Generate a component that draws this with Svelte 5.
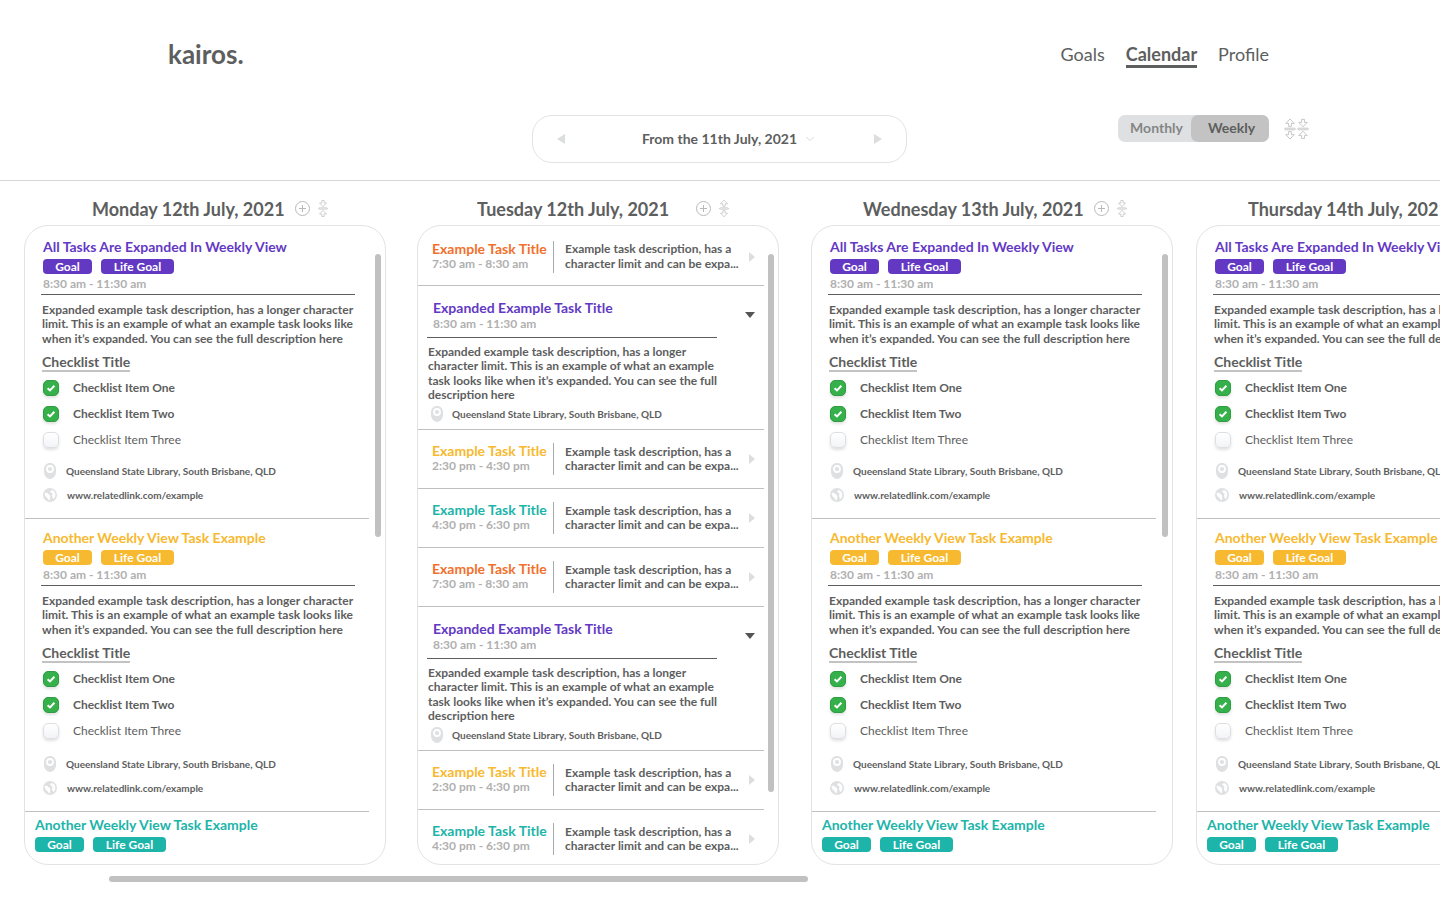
<script>
  const description =
    'Expanded example task description, has a longer character limit. This is an example of what an example task looks like when it’s expanded. You can see the full description here';
  const place = 'Queensland State Library, South Brisbane, QLD';

  const checklist = () => [
    { label: 'Checklist Item One', done: true },
    { label: 'Checklist Item Two', done: true },
    { label: 'Checklist Item Three', done: false }
  ];

  const weekly = () => [
    { kind: 'full', tone: 'purple', title: 'All Tasks Are Expanded In Weekly View', time: '8:30 am - 11:30 am', items: checklist() },
    { kind: 'full', tone: 'yellow', title: 'Another Weekly View Task Example', time: '8:30 am - 11:30 am', items: checklist() },
    { kind: 'brief', tone: 'teal', title: 'Another Weekly View Task Example' }
  ];

  const row = (tone, time) => ({ kind: 'row', tone, title: 'Example Task Title', time });
  const open = () => ({ kind: 'open', tone: 'purple', title: 'Expanded Example Task Title', time: '8:30 am - 11:30 am' });

  let days = $state([
    { name: 'Monday 12th July, 2021', inset: 68, gap: 10, icon: 'collapse', thumb: 283 / 638, tasks: weekly() },
    {
      name: 'Tuesday 12th July, 2021',
      inset: 60,
      gap: 27,
      icon: 'expand',
      wide: true,
      thumb: 538 / 638,
      tasks: [
        row('orange', '7:30 am - 8:30 am'),
        open(),
        row('yellow', '2:30 pm - 4:30 pm'),
        row('teal', '4:30 pm - 6:30 pm'),
        row('orange', '7:30 am - 8:30 am'),
        open(),
        row('yellow', '2:30 pm - 4:30 pm'),
        row('teal', '4:30 pm - 6:30 pm')
      ]
    },
    { name: 'Wednesday 13th July, 2021', inset: 52, gap: 10, icon: 'collapse', thumb: 283 / 638, tasks: weekly() },
    { name: 'Thursday 14th July, 2021', inset: 52, gap: 10, icon: 'collapse', thumb: 283 / 638, tasks: weekly() }
  ]);

  let view = $state('Weekly');
</script>

{#snippet arrows(kind)}
  <svg class="arrows" viewBox="0 0 12 22" aria-hidden="true">
    {#if kind === 'expand'}
      <path d="M6 1 L10.2 5.4 H7.4 V8.4 H4.6 V5.4 H1.8 Z" />
      <path d="M6 21 L10.2 16.6 H7.4 V13.6 H4.6 V16.6 H1.8 Z" />
    {:else}
      <path d="M6 8.8 L10.2 4.4 H7.4 V1.4 H4.6 V4.4 H1.8 Z" />
      <path d="M6 13.2 L10.2 17.6 H7.4 V20.6 H4.6 V17.6 H1.8 Z" />
    {/if}
    <rect x="0.7" y="10.2" width="10.6" height="1.6" rx="0.8" />
  </svg>
{/snippet}

{#snippet pin()}
  <svg class="pin" viewBox="0 0 14 16" aria-hidden="true">
    <path d="M7 0 C10.6 0 13 2.7 13 6.4 V8.6 C13 12.6 10.5 16 7 16 C3.5 16 1 12.6 1 8.6 V6.4 C1 2.7 3.4 0 7 0 Z" fill="#dfe0e2" />
    <circle cx="7" cy="6" r="3" fill="none" stroke="#fff" stroke-width="1.8" />
  </svg>
{/snippet}

{#snippet globe()}
  <svg class="globe" viewBox="0 0 14 14" aria-hidden="true">
    <circle cx="7" cy="7" r="7" fill="#dfe0e2" />
    <path d="M1.6 5 C3 4.4 4.6 4.6 5.4 6 C6.4 6.6 7.6 7.4 7.2 8.8 C7 10 7.4 11.4 6.4 12.4 C5.2 11.8 4.8 10.4 3.8 9.6 C2.6 8.8 1.4 7 1.6 5 Z M7.2 3 C8 2.2 9.4 1.8 10.2 2.6 C11.4 3.4 12.4 5 12.4 6.8 C12.4 8.6 11.6 10.2 10.4 11 C9.4 10.4 9.6 8.8 8.8 7.8 C9.4 6.8 9.8 6 9 5.2 C8.2 4.8 7 4 7.2 3 Z" fill="#fff" />
  </svg>
{/snippet}

{#snippet tags()}
  <div class="tags"><span class="tag">Goal</span><span class="tag long">Life Goal</span></div>
{/snippet}

<div class="page">
  <header>
    <div class="top">
      <a class="logo" href="#home">kairos.</a>
      <nav>
        <a href="#goals">Goals</a>
        <a href="#calendar" class="current" aria-current="page">Calendar</a>
        <a href="#profile">Profile</a>
      </nav>
    </div>
    <div class="controls">
      <div class="pager">
        <button aria-label="Previous week"><svg width="8" height="10" viewBox="0 0 8 10"><path d="M8 0 V10 L0 5 Z" fill="#dcdddf" /></svg></button>
        <button class="range">
          From the 11th July, 2021
          <svg width="10" height="6" viewBox="0 0 10 6"><path d="M1 1 L5 4.4 L9 1" fill="none" stroke="#dcdddf" /></svg>
        </button>
        <button aria-label="Next week"><svg width="8" height="10" viewBox="0 0 8 10"><path d="M0 0 V10 L8 5 Z" fill="#dcdddf" /></svg></button>
      </div>
      <div class="tools">
        <div class="toggle">
          {#each ['Monthly', 'Weekly'] as name}
            <button class:on={view === name} aria-pressed={view === name} onclick={() => (view = name)}>{name}</button>
          {/each}
        </div>
        <div class="all">
          <button aria-label="Expand all">{@render arrows('expand')}</button>
          <button aria-label="Collapse all">{@render arrows('collapse')}</button>
        </div>
      </div>
    </div>
  </header>

  <main>
    <div class="board">
      {#each days as day}
        <section>
          <div class="day-head" style="padding-left: {day.inset}px; gap: {day.gap}px">
            <h2>{day.name}</h2>
            <div class="day-tools">
              <button aria-label="Add task">
                <svg width="15" height="15" viewBox="0 0 15 15" fill="none" stroke="#b9b9b9"><circle cx="7.5" cy="7.5" r="7" /><path d="M7.5 4 V11 M4 7.5 H11" /></svg>
              </button>
              <button class="small" aria-label="Toggle tasks">{@render arrows(day.icon)}</button>
            </div>
          </div>
          <div class="card">
            <div class="list" class:wide={day.wide}>
              {#each day.tasks as task}
                <article class="{task.kind} {task.tone}">
                  {#if task.kind === 'row'}
                    <div class="summary">
                      <h3>{task.title}</h3>
                      <time>{task.time}</time>
                    </div>
                    <p>Example task description, has a character limit and can be expa...</p>
                    <button aria-label="Open task"><svg width="6" height="10" viewBox="0 0 6 10"><path d="M0 0 V10 L6 5 Z" fill="#dcdddf" /></svg></button>
                  {:else if task.kind === 'open'}
                    <div class="open-head">
                      <div class="summary">
                        <h3>{task.title}</h3>
                        <time>{task.time}</time>
                      </div>
                      <button aria-label="Close task"><svg width="10" height="6" viewBox="0 0 10 6"><path d="M0 0 H10 L5 6 Z" fill="#555" /></svg></button>
                    </div>
                    <p>{description}</p>
                    <div class="info">{@render pin()}<span>{place}</span></div>
                  {:else}
                    <h3>{task.title}</h3>
                    {@render tags()}
                    {#if task.items}
                      <time>{task.time}</time>
                      <p>{description}</p>
                      <h4>Checklist Title</h4>
                      <div class="checks">
                        {#each task.items as item}
                          <label class:done={item.done}><input type="checkbox" bind:checked={item.done} />{item.label}</label>
                        {/each}
                      </div>
                      <div class="details">
                        <div class="info">{@render pin()}<span>{place}</span></div>
                        <div class="info link">{@render globe()}<a href="#link">www.relatedlink.com/example</a></div>
                      </div>
                    {/if}
                  {/if}
                </article>
              {/each}
            </div>
            <div class="thumb" style="height: {day.thumb * 100}%"></div>
          </div>
        </section>
      {/each}
    </div>
    <div class="scroll"></div>
  </main>
</div>

<style>
  :global(body) {
    margin: 0;
    background: #fff;
  }
  .page {
    display: flex;
    flex-direction: column;
    height: 100vh;
    min-height: 480px;
    overflow: hidden;
    font-family: Lato, 'Open Sans', sans-serif;
    font-size: 12px;
    font-weight: 700;
    line-height: 1.2;
    color: #5d5e5e;
  }
  h2, h3, h4, p {
    margin: 0;
    font-weight: inherit;
  }
  button {
    display: flex;
    align-items: center;
    padding: 0;
    border: 0;
    background: none;
    font: inherit;
    color: inherit;
    cursor: pointer;
  }
  a {
    color: inherit;
    text-decoration: none;
  }
  svg {
    display: block;
    flex: none;
  }

  header {
    border-bottom: 1px solid #d6d7d8;
    padding-bottom: 17px;
  }
  .top {
    display: flex;
    justify-content: space-between;
    align-items: flex-start;
    padding: 37px 171px 44px 168px;
  }
  .logo {
    font-size: 26px;
    line-height: 34px;
  }
  nav {
    display: flex;
    gap: 21px;
    padding-top: 6px;
    font-size: 18px;
    font-weight: 400;
    line-height: 22px;
  }
  nav a {
    border-bottom: 3px solid transparent;
  }
  nav .current {
    font-weight: 700;
    border-color: #5d5e5e;
  }
  .controls {
    display: grid;
    grid-template-columns: 1fr 375px 1fr;
    align-items: start;
    padding: 0 131px 0 130px;
  }
  .pager {
    grid-column: 2;
    display: flex;
    justify-content: space-between;
    align-items: center;
    height: 48px;
    box-sizing: border-box;
    padding: 0 24px;
    border: 1px solid #e2e3e4;
    border-radius: 20px;
  }
  .range {
    gap: 8px;
    font-size: 14px;
    padding-left: 18px;
  }
  .tools {
    display: flex;
    justify-content: flex-end;
    align-items: center;
    gap: 15px;
  }
  .toggle {
    display: flex;
    border-radius: 7px;
    background: #dfe0e2;
    font-size: 14px;
  }
  .toggle button {
    justify-content: center;
    width: 77px;
    height: 27px;
    border-radius: 7px;
    color: #858686;
  }
  .toggle button + button {
    width: 78px;
    margin-left: -4px;
    padding-left: 3px;
  }
  .toggle .on {
    background: #c3c3c3;
    color: #5d5e5e;
  }
  .all {
    display: flex;
    gap: 1px;
  }
  .arrows {
    width: 12px;
    height: 22px;
    fill: none;
    stroke: #b9b9b9;
    stroke-width: 0.8;
  }
  .small .arrows {
    width: 10px;
    height: 19px;
  }

  main {
    flex: 1;
    min-height: 0;
    display: flex;
    flex-direction: column;
    padding: 16px 0 18px 24px;
  }
  .board {
    flex: 1;
    min-height: 0;
    display: grid;
    grid-template-columns: 393px 394px 385px 362px;
    grid-template-rows: minmax(0, 1fr);
  }
  section {
    display: flex;
    flex-direction: column;
    width: 362px;
  }
  .day-head {
    display: flex;
    align-items: center;
    height: 28px;
    box-sizing: border-box;
    padding-bottom: 5px;
    white-space: nowrap;
  }
  h2 {
    font-size: 18px;
    line-height: 22px;
  }
  .day-tools {
    display: flex;
    align-items: center;
    gap: 8px;
  }
  .card {
    flex: 1;
    min-height: 0;
    display: flex;
    align-items: flex-start;
    justify-content: space-between;
    padding-right: 4px;
    border: 1px solid #e2e3e4;
    border-radius: 24px;
    overflow: hidden;
  }
  .list {
    width: 344px;
    height: 100%;
    overflow: hidden;
  }
  .list.wide {
    width: 346px;
  }
  .thumb {
    width: 6px;
    margin-top: 28px;
    border-radius: 3px;
    background: #c1c1c1;
  }
  .scroll {
    width: 699px;
    height: 6px;
    margin: 11px 0 0 85px;
    border-radius: 3px;
    background: #c1c1c1;
  }

  article {
    box-sizing: border-box;
    border-bottom: 1px solid #bfc0c0;
  }
  .purple { --tone: #6339c4; }
  .yellow { --tone: #f7b92f; }
  .teal { --tone: #1db4aa; }
  .orange { --tone: #f26f2c; }
  h3 {
    font-size: 14px;
    line-height: 17px;
    color: var(--tone);
  }
  time {
    display: block;
    line-height: 14px;
    color: #b0b0b0;
  }
  .full {
    display: flex;
    flex-direction: column;
    min-height: 293px;
    padding: 10px 14px 14px 16px;
  }
  .full:first-child {
    padding-top: 12px;
  }
  .full h3, .full .tags {
    margin-left: 2px;
  }
  .full time {
    margin: 3px 0 0 2px;
  }
  .full p {
    margin-top: 3px;
    padding: 8px 0 0 1px;
    border-top: 1px solid #5d5e5e;
  }
  .tags {
    display: flex;
    gap: 9px;
    margin-top: 4px;
  }
  .tag {
    width: 49px;
    border-radius: 4px;
    background: var(--tone);
    color: #fff;
    line-height: 15px;
    text-align: center;
  }
  .tag.long {
    width: 73px;
  }
  h4 {
    align-self: flex-start;
    margin: 7px 0 0 1px;
    border-bottom: 2px solid #c3c3c3;
    font-size: 14px;
    line-height: 17px;
  }
  .checks {
    display: flex;
    flex-direction: column;
    gap: 10px;
    margin: 8px 0 0 2px;
  }
  label {
    display: flex;
    align-items: center;
    gap: 14px;
    line-height: 16px;
    font-weight: 400;
  }
  label.done {
    font-weight: 700;
  }
  input {
    appearance: none;
    width: 16px;
    height: 16px;
    margin: 0;
    box-sizing: border-box;
    border: 1px solid #dddfe3;
    border-radius: 5px;
    background: linear-gradient(#fff, #f3f4f7);
    box-shadow: 0 2px 3px rgb(0 0 0 / 12%);
  }
  input:checked {
    border-color: #2f9e42;
    background: #35b04a url("data:image/svg+xml,%3Csvg xmlns='http://www.w3.org/2000/svg' viewBox='0 0 14 14'%3E%3Cpath d='M3.6 7.2 L6 9.4 L10.4 4.8' fill='none' stroke='white' stroke-width='2'/%3E%3C/svg%3E") center / 14px 14px;
  }
  .details {
    display: flex;
    flex-direction: column;
    gap: 8px;
    margin: auto 0 0 2px;
  }
  .info {
    display: flex;
    align-items: center;
    gap: 9px;
    height: 16px;
    font-size: 10px;
  }
  .link {
    gap: 10px;
  }
  .pin {
    width: 14px;
    height: 16px;
  }
  .globe {
    width: 14px;
    height: 14px;
  }
  .full .details {
    padding-bottom: 1px;
  }
  .brief {
    padding: 4px 0 0 10px;
    border: 0;
  }

  .row {
    display: flex;
    align-items: center;
    height: 59px;
    padding: 0 9px 0 14px;
  }
  .row:first-child {
    height: 60px;
    padding-top: 2px;
  }
  .row .summary {
    width: 121px;
    padding-bottom: 1px;
    border-right: 1px solid #a9aaaa;
    white-space: nowrap;
  }
  .row h3 {
    line-height: 15px;
  }
  .row time {
    line-height: 16px;
  }
  .row p {
    flex: 1;
    padding: 0 8px 0 11px;
  }
  .open {
    height: 144px;
    padding: 13px 8px 5px 9px;
  }
  .open-head {
    display: flex;
    justify-content: space-between;
    align-items: center;
  }
  .open-head button {
    padding: 0 1px 8px 0;
  }
  .open .summary {
    width: 284px;
    padding: 0 0 5px 6px;
    border-bottom: 1px solid #5d5e5e;
  }
  .open time {
    line-height: 16px;
  }
  .open p {
    width: 290px;
    padding: 7px 0 3px 1px;
  }
  .open .info {
    margin-left: 3px;
    gap: 8px;
  }
</style>
